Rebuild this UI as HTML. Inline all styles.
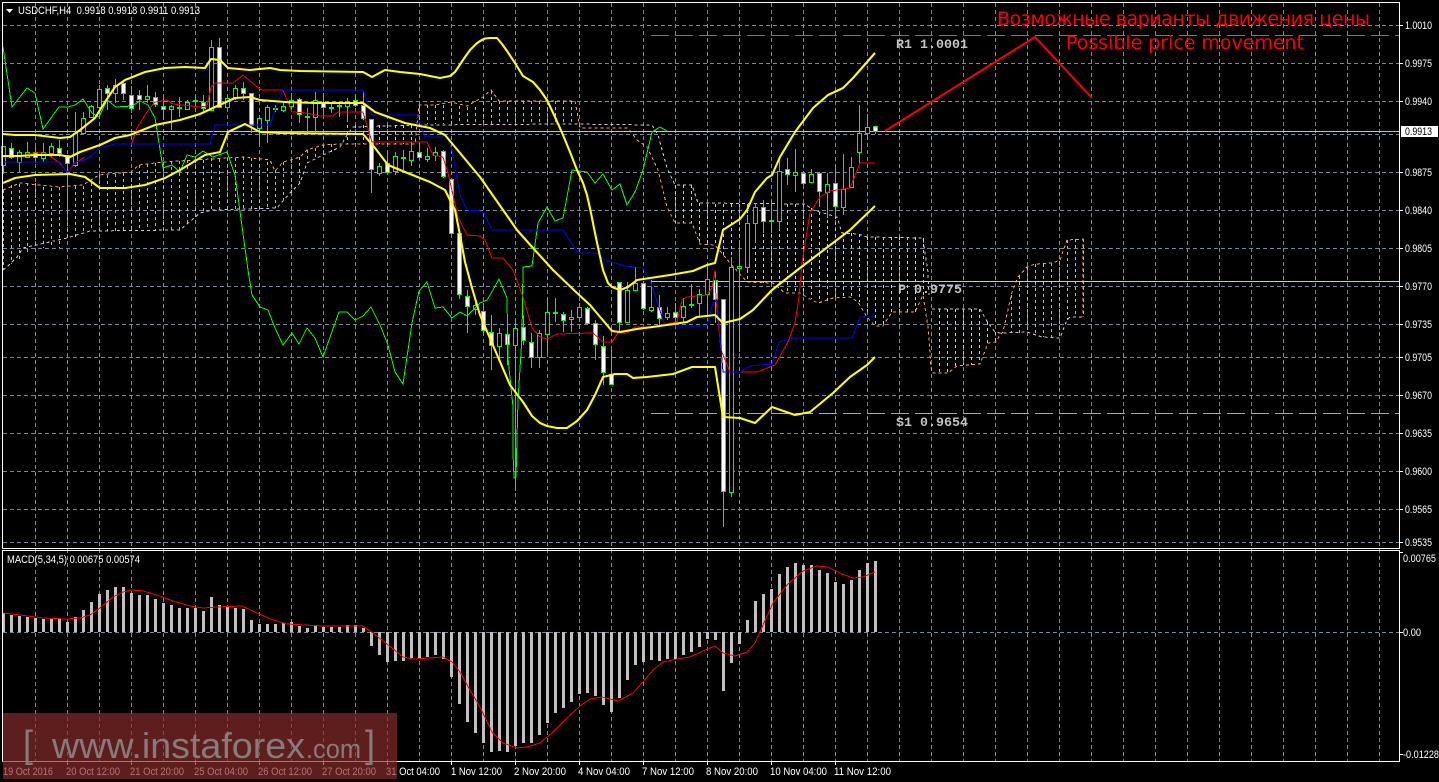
<!DOCTYPE html>
<html lang="en">
<head>
<meta charset="utf-8">
<title>USDCHF,H4</title>
<style>
html,body{margin:0;padding:0;background:#000;width:1439px;height:782px;overflow:hidden}
svg{display:block}
.a{font-family:"Liberation Sans",sans-serif;font-size:11px;fill:#fff}
.m{font-family:"Liberation Mono",monospace;font-size:13.33px;font-weight:bold;fill:#c4c4c4}
.r{font-family:"DejaVu Sans",sans-serif;font-size:19px;fill:#f00}
.c{shape-rendering:crispEdges;fill:none}
</style>
</head>
<body>
<svg width="1439" height="782" viewBox="0 0 1439 782" xmlns="http://www.w3.org/2000/svg">
<rect width="1439" height="782" fill="#000"/>

<!-- grid -->
<path class="c" stroke="#778899" stroke-dasharray="4 3" d="M35.5 3V761M67.5 3V761M99.5 3V761M131.5 3V761M163.5 3V761M195.5 3V761M227.5 3V761M259.5 3V761M291.5 3V761M323.5 3V761M355.5 3V761M387.5 3V761M419.5 3V761M451.5 3V761M483.5 3V761M515.5 3V761M547.5 3V761M579.5 3V761M611.5 3V761M643.5 3V761M675.5 3V761M707.5 3V761M739.5 3V761M771.5 3V761M803.5 3V761M835.5 3V761M867.5 3V761M899.5 3V761M931.5 3V761M963.5 3V761M995.5 3V761M1027.5 3V761M1059.5 3V761M1091.5 3V761M1123.5 3V761M1155.5 3V761M1187.5 3V761M1219.5 3V761M1251.5 3V761M1283.5 3V761M1315.5 3V761M1347.5 3V761M1379.5 3V761"/>
<path class="c" stroke="#778899" stroke-dasharray="4 3" d="M3 25.5H1399M3 63.5H1399M3 101.5H1399M3 134.5H1399M3 172.5H1399M3 210.5H1399M3 248.5H1399M3 286.5H1399M3 324.5H1399M3 357.5H1399M3 395.5H1399M3 433.5H1399M3 471.5H1399M3 509.5H1399M3 542.5H1399M3 632.5H1399"/>

<!-- ichimoku hatch -->
<path class="c" stroke="#f4a460" stroke-dasharray="3 3" d="M3.5 190V270M11.5 185V264M19.5 184V259M27.5 183V252M35.5 183V248M43.5 187V248M51.5 188V248M59.5 187V248M67.5 187V238M75.5 186V237M83.5 186V233M91.5 183V231M99.5 175V231M107.5 175V231M115.5 174V231M123.5 173V231M131.5 172V231M139.5 165V231M147.5 164V231M155.5 163V231M163.5 162V231M171.5 161V231M179.5 161V230M187.5 160V225M195.5 160V218M203.5 160V213M211.5 158V210M219.5 159V210M227.5 158V210M235.5 158V210M243.5 157V210M251.5 158V210M259.5 158V209M267.5 162V209M275.5 170V208M283.5 162V200M291.5 160V193M299.5 157V183M307.5 150V163M315.5 148V160M323.5 145V155M331.5 144V152M419.5 105V124M427.5 105V124M435.5 105V124M443.5 105V124M451.5 103V124M459.5 106V124M467.5 107V124M475.5 107V124M483.5 96V124M491.5 91V124M499.5 101V124M507.5 101V124M515.5 101V124M523.5 101V124M531.5 101V124M539.5 101V124M547.5 101V124M555.5 101V124M563.5 101V124M571.5 101V124M1011.5 295V333M1019.5 276V333M1027.5 267V332M1035.5 264V334M1043.5 264V337M1051.5 263V338M1059.5 261V338M1067.5 240V320M1075.5 239V317M1083.5 239V317"/>
<path class="c" stroke="#d8bfd8" stroke-dasharray="3 3" d="M347.5 125V144M355.5 125V144M363.5 125V144M371.5 125V144M379.5 125V144M387.5 125V144M395.5 125V144M403.5 125V144M411.5 125V144M675.5 185V223M683.5 185V223M691.5 185V223M699.5 203V244M707.5 204V245M715.5 204V245M723.5 204V257M731.5 204V263M739.5 204V270M747.5 204V282M755.5 204V283M763.5 204V283M771.5 204V283M779.5 204V288M787.5 204V293M795.5 204V293M803.5 204V295M811.5 208V299M819.5 212V303M827.5 214V302M835.5 216V298M843.5 233V298M851.5 233V297M859.5 234V302M867.5 237V315M875.5 237V326M883.5 237V326M891.5 237V313M899.5 237V312M907.5 237V312M915.5 237V312M923.5 238V295M939.5 309V373M947.5 309V373M955.5 309V367M963.5 309V365M971.5 309V365M979.5 309V364M987.5 322V343M995.5 332V342"/>
<!-- span A -->
<path class="c" stroke="#f4a460" stroke-dasharray="3 3" d="M3 190L20 183L59 187L83 185L99 175L131 172L139 165L163 162L195 160L243 157L270 160L275 171L283 162L291 160L300 157L307 150L323 145L340 144L400 144L415 144L419 105L435 105L451 102L467 106L483 97L491 90L499 101L575 101L580 128L628 128L637 140L647 147L658 170L667 207L675 223L692 223L700 244L715 245L730 263L747 282L773 283L785 293L800 293L808 298L818 303L833 298L850 297L858 302L867 317L875 326L883 326L890 315L892 312L915 312L923 295L928 327L931 367L932 373L948 373L957 366L980 364L988 343L996 342L1000 335L1003 332L1012 292L1018 277L1027 267L1035 264L1053 263L1060 260L1067 240L1083 239V317"/>
<!-- span B -->
<path class="c" stroke="#d8bfd8" stroke-dasharray="3 3" d="M3 270L7 267L17 257L23 248L67 238L90 231L180 230L200 213L213 210L277 208L290 193L300 183L307 163L323 155L340 147L347 135L353 127L417 125L572 124L652 125L658 135L667 168L675 185L692 185L698 203L805 204L813 210L837 217L842 233L858 234L867 237L923 238L925 253L928 272L929 295M932 309H980L988 323L995 332L1000 333L1027 332L1042 337L1060 338L1067 320L1070 317H1083"/>

<!-- pivot lines -->
<path class="c" stroke="#c0c0c0" d="M3 131.5H1399"/>
<path class="c" stroke="#e0531c" stroke-dasharray="18 6" d="M651 35.5H1399"/>
<path class="c" stroke="#f5cc3a" d="M651 281.5H1399"/>
<path class="c" stroke="#b8a498" stroke-dasharray="18 6" d="M651 413.5H1399"/>

<!-- wicks -->
<path class="c" stroke="#00ff00" d="M3.5 146V174M11.5 143V159M19.5 150V172M27.5 142V157M35.5 147V163M43.5 143V162M51.5 143V157M59.5 140V157M67.5 155V210M75.5 112V167M83.5 112V133M91.5 105V118M99.5 85V118M107.5 85V110M115.5 79V103M123.5 80V100M131.5 86V113M139.5 90V110M147.5 85V103M155.5 92V107M163.5 97V120M171.5 105V130M179.5 97V117M187.5 100V110M195.5 97V107M203.5 95V112M211.5 40V110M219.5 38V108M227.5 95V110M235.5 85V100M243.5 82V100M251.5 93V133M259.5 117V143M267.5 105V143M275.5 105V112M283.5 103V112M291.5 93V112M299.5 98V123M307.5 108V133M315.5 92V133M323.5 93V115M331.5 103V113M339.5 102V117M347.5 98V122M355.5 95V107M363.5 92V120M371.5 119V193M379.5 163V176M387.5 153V173M395.5 152V175M403.5 150V170M411.5 142V166M419.5 142V160M427.5 148V162M435.5 147V161M443.5 150V178M451.5 179V234M459.5 233V299M467.5 290V333M475.5 303V315M483.5 303V333M491.5 315V370M499.5 328V362M507.5 328V365M515.5 320V491M523.5 315V345M531.5 333V368M539.5 330V368M547.5 298V353M555.5 298V322M563.5 312V332M571.5 310V332M579.5 303V320M587.5 307V325M595.5 320V360M603.5 336V385M611.5 350V385M619.5 282V332M627.5 282V323M635.5 267V290M643.5 281V310M651.5 280V312M659.5 295V325M667.5 307V320M675.5 303V318M683.5 298V323M691.5 284V308M699.5 289V318M707.5 263V317M715.5 272V323M723.5 299V527M731.5 257V497M739.5 240V352M747.5 215V270M755.5 203V243M763.5 200V233M771.5 200V233M779.5 158V230M787.5 158V185M795.5 149V192M803.5 172V185M811.5 169V183M819.5 172V207M827.5 173V218M835.5 168V217M843.5 154V215M851.5 157V188M859.5 105V163M867.5 114V140M875.5 126V134"/>
<!-- hollow bodies -->
<path class="c" style="fill:#000" stroke="#00ff00" d="M1.5 146.5h4v19h-4zM17.5 152.5h4v10h-4zM25.5 152.5h4v5h-4zM41.5 152.5h4v6h-4zM49.5 146.5h4v7h-4zM73.5 133.5h4v32h-4zM81.5 118.5h4v15h-4zM89.5 106.5h4v11h-4zM97.5 89.5h4v18h-4zM113.5 85.5h4v8h-4zM145.5 96.5h4v3h-4zM169.5 106.5h4v3h-4zM177.5 107.5h4v1h-4zM185.5 102.5h4v7h-4zM193.5 100.5h4v1h-4zM209.5 47.5h4v63h-4zM225.5 98.5h4v9h-4zM233.5 88.5h4v10h-4zM257.5 118.5h4v10h-4zM265.5 107.5h4v13h-4zM273.5 108.5h4v1h-4zM281.5 106.5h4v4h-4zM289.5 100.5h4v6h-4zM305.5 116.5h4v1h-4zM313.5 100.5h4v17h-4zM329.5 107.5h4v1h-4zM337.5 105.5h4v1h-4zM345.5 101.5h4v5h-4zM377.5 166.5h4v7h-4zM393.5 156.5h4v15h-4zM401.5 157.5h4v1h-4zM409.5 151.5h4v9h-4zM425.5 156.5h4v3h-4zM433.5 152.5h4v3h-4zM473.5 305.5h4v4h-4zM497.5 333.5h4v13h-4zM513.5 328.5h4v17h-4zM537.5 333.5h4v24h-4zM545.5 312.5h4v22h-4zM553.5 312.5h4v1h-4zM569.5 317.5h4v2h-4zM577.5 307.5h4v10h-4zM625.5 290.5h4v32h-4zM633.5 283.5h4v7h-4zM649.5 307.5h4v3h-4zM665.5 313.5h4v4h-4zM681.5 306.5h4v11h-4zM689.5 304.5h4v1h-4zM697.5 294.5h4v9h-4zM705.5 279.5h4v15h-4zM729.5 267.5h4v225h-4zM737.5 266.5h4v2h-4zM745.5 223.5h4v44h-4zM753.5 207.5h4v16h-4zM769.5 220.5h4v1h-4zM777.5 171.5h4v50h-4zM793.5 172.5h4v3h-4zM809.5 174.5h4v8h-4zM825.5 184.5h4v8h-4zM841.5 189.5h4v18h-4zM849.5 167.5h4v20h-4zM857.5 133.5h4v19h-4zM865.5 127.5h4v6h-4z"/>
<!-- white bodies -->
<path class="c" style="fill:#fff" stroke="#00ff00" d="M9.5 148.5h4v9h-4zM33.5 152.5h4v5h-4zM57.5 148.5h4v5h-4zM65.5 155.5h4v8h-4zM105.5 88.5h4v5h-4zM121.5 83.5h4v10h-4zM129.5 95.5h4v13h-4zM137.5 95.5h4v4h-4zM153.5 97.5h4v7h-4zM161.5 106.5h4v3h-4zM201.5 102.5h4v6h-4zM217.5 47.5h4v60h-4zM241.5 88.5h4v5h-4zM249.5 93.5h4v32h-4zM297.5 99.5h4v15h-4zM321.5 102.5h4v5h-4zM353.5 100.5h4v5h-4zM361.5 105.5h4v13h-4zM369.5 119.5h4v50h-4zM385.5 163.5h4v9h-4zM417.5 152.5h4v5h-4zM441.5 151.5h4v25h-4zM449.5 179.5h4v54h-4zM457.5 233.5h4v61h-4zM465.5 296.5h4v10h-4zM481.5 311.5h4v19h-4zM489.5 332.5h4v13h-4zM505.5 334.5h4v10h-4zM521.5 327.5h4v13h-4zM529.5 342.5h4v15h-4zM561.5 314.5h4v6h-4zM585.5 308.5h4v15h-4zM593.5 323.5h4v21h-4zM601.5 346.5h4v26h-4zM609.5 374.5h4v10h-4zM617.5 282.5h4v40h-4zM641.5 283.5h4v25h-4zM657.5 307.5h4v11h-4zM673.5 312.5h4v5h-4zM713.5 280.5h4v19h-4zM721.5 299.5h4v192h-4zM761.5 207.5h4v14h-4zM785.5 169.5h4v5h-4zM801.5 173.5h4v10h-4zM817.5 173.5h4v18h-4zM833.5 183.5h4v23h-4zM873.5 126.5h4v5h-4z"/>

<!-- chikou -->
<path class="c" stroke="#00ff00" d="M3 47L12 107L27 88L35 93L43 129L59 107L68 107L75 105L83 99L92 113L99 117L107 100L116 107L132 106L140 101L148 105L155 118L163 168L172 165L180 172L187 155L195 157L203 151L213 157L227 152L235 175L248 270L252 295L260 307L268 310L275 328L283 345L292 333L299 344L307 328L315 338L323 357L339 312L347 312L355 320L363 316L371 307L380 325L388 345L395 372L403 384L412 323L419 291L427 282L435 308L443 307L452 318L460 312L467 316L475 308L480 303L487 300L493 290L499 279L507 298L508 358L513 407L513 453L514 478L516 477L518 400L522 337L523 267L532 266L538 223L547 207L555 221L563 218L572 170L587 172L595 183L603 174L612 190L620 184L627 205L635 192L643 170L652 132L660 127L667 131"/>
<!-- tenkan red -->
<path class="c" stroke="#ff0000" d="M3 157L20 156L33 153L45 153L60 163L67 172L75 163L85 157M132 143L137 128L147 112L155 102L167 100L173 104L200 107L207 106L211 87L215 83L233 83L243 75L257 87L262 90L283 90L292 112L307 113L320 116L333 116L338 112L363 112L372 142L427 142L433 155L443 157L448 173L458 217L467 235L480 236L485 240L492 258L503 258L513 270L523 297L532 328L540 337L547 339L557 334L593 333L603 342L612 342L618 333L627 333L635 327L650 327L677 322L682 300L687 297L707 295L712 288L715 270L716 300L721 350L730 372L757 372L775 365L788 342L795 323L799 297L802 263L810 213L820 197L830 191L850 188L860 163H875"/>
<!-- kijun blue -->
<path class="c" stroke="#0000ff" d="M3 162H60L67 172L75 162L85 160L92 155L100 148L115 144H210L215 125H270L275 110L283 90H363L372 115H417L425 137H447L452 150L460 195L467 210L480 211L484 213L492 230H563L578 253H597L605 260L625 266L643 268L650 280L665 326H707L713 303L717 300L723 372H740L750 366L772 364L779 342L793 338H852L860 317H875"/>

<!-- bollinger -->
<g fill="none" stroke="#ffff00" stroke-width="2.1" stroke-linejoin="round">
<path d="M3 134L15 135L35 135L60 138L70 137L80 130L95 118L105 102L115 87L125 80L145 72L165 68L185 67L205 68L211 59L220 60L228 68L250 70L270 68L280 70L300 71L363 72L372 77L385 70L400 72L420 74L440 78L450 76L455 72L459 66L465 57L470 50L476 44L480 41L485 38.5L490 38L497 38L502 44L507 51L515 63L523 76L533 82L540 90L547 100L555 117L563 135L570 152L577 170L583 183L587 195L591 213L595 233L599 252L603 270L608 283L612 287L620 290L628 287L637 280L670 275L693 271L707 265L715 263L723 230L740 219L747 210L755 192L767 178L772 175L780 157L795 132L813 108L828 95L843 88L853 78L875 53"/>
<path d="M3 156L20 156L35 155L60 155L70 157L80 152L100 145L115 138L130 135L155 125L180 120L200 114L215 107L235 98L250 97L260 100L285 102L315 103L363 103L375 112L405 123L430 128L445 135L455 147L480 177L517 230L533 248L553 270L577 293L590 305L612 331L620 332L637 329L660 326L687 322L697 317L715 315L723 323L740 319L753 310L772 290L800 268L850 230L875 206"/>
<path d="M3 183L15 178L35 175L70 174L85 177L100 188L125 188L145 185L165 178L180 170L205 155L220 152L228 132L245 124L260 132L280 133L363 134L375 148L388 165L405 172L430 182L445 190L455 210L460 235L465 262L472 288L480 315L495 350L510 385L523 402L532 416L540 423L547 426L557 428L567 428L577 421L587 410L595 395L603 377L615 374L627 374L633 378L647 377L673 374L692 367L715 367L723 417L740 418L755 423L772 407L795 415L810 412L833 393L850 377L867 365L875 357"/>
</g>

<!-- arrow -->
<path fill="none" stroke="#ff0000" stroke-width="2" d="M885 131L1035 37L1092 98"/>

<!-- pivot labels -->
<text class="m" x="896" y="48" textLength="72">R1 1.0001</text>
<text class="m" x="898" y="293" textLength="64">P 0.9775</text>
<text class="m" x="896" y="426" textLength="72">S1 0.9654</text>

<!-- red captions -->
<text class="r" x="997" y="25" textLength="373">Возможные варианты движения цены</text>
<text class="r" x="1066" y="49" textLength="238">Possible price movement</text>

<!-- MACD bars -->
<path class="c" stroke="#c0c0c0" stroke-width="3" d="M3.5 632V613M11.5 632V615M19.5 632V616M27.5 632V617M35.5 632V618M43.5 632V619M51.5 632V618M59.5 632V618M67.5 632V622M75.5 632V617M83.5 632V610M91.5 632V602M99.5 632V594M107.5 632V590M115.5 632V587M123.5 632V587M131.5 632V593M139.5 632V595M147.5 632V595M155.5 632V599M163.5 632V603M171.5 632V605M179.5 632V608M187.5 632V608M195.5 632V608M203.5 632V611M211.5 632V597M219.5 632V605M227.5 632V607M235.5 632V608M243.5 632V609M251.5 632V620M259.5 632V624M267.5 632V624M275.5 632V624M283.5 632V623M291.5 632V622M299.5 632V626M307.5 632V628M315.5 632V626M323.5 632V627M331.5 632V627M339.5 632V627M347.5 632V625M355.5 632V625M363.5 632V628M371.5 632V646M379.5 632V655M387.5 632V662M395.5 632V661M403.5 632V661M411.5 632V658M419.5 632V658M427.5 632V657M435.5 632V655M443.5 632V659M451.5 632V677M459.5 632V704M467.5 632V722M475.5 632V733M483.5 632V743M491.5 632V752M499.5 632V751M507.5 632V752M515.5 632V746M523.5 632V743M531.5 632V743M539.5 632V735M547.5 632V723M555.5 632V713M563.5 632V708M571.5 632V702M579.5 632V694M587.5 632V693M595.5 632V696M603.5 632V705M611.5 632V712M619.5 632V698M627.5 632V680M635.5 632V665M643.5 632V662M651.5 632V660M659.5 632V661M667.5 632V659M675.5 632V659M683.5 632V655M691.5 632V652M699.5 632V647M707.5 632V639M715.5 632V640M723.5 632V691M731.5 632V663M739.5 632V644M747.5 632V620M755.5 632V601M763.5 632V594M771.5 632V589M779.5 632V574M787.5 632V567M795.5 632V563M803.5 632V565M811.5 632V565M819.5 632V570M827.5 632V573M835.5 632V582M843.5 632V584M851.5 632V580M859.5 632V570M867.5 632V563M875.5 632V561"/>
<!-- MACD signal -->
<path class="c" stroke="#ff0000" d="M3 613L20 615L43 618L67 619L80 618L90 615L100 608L113 597L123 592L132 590L143 591L157 595L173 601L190 606L203 608L217 607L242 606L257 613L273 620L287 624L323 626L363 626L373 633L387 644L403 657L413 659L430 658L443 657L452 662L460 672L470 690L480 707L492 732L503 743L517 748L527 747L540 743L552 733L565 720L580 706L590 699L602 697L618 701L633 693L643 682L653 670L663 662L677 659L690 657L703 651L715 646L723 653L735 656L747 652L755 643L763 625L773 603L787 585L803 571L817 566L828 567L842 574L853 578L863 577L875 572"/>

<!-- frames -->
<path class="c" stroke="#fff" d="M2.5 548.5V2.5H1399.5V548.5H2.5M2.5 761.5V550.5H1399.5V761.5H2.5"/>
<path class="c" stroke="#fff" d="M1399 25.5h4M1399 63.5h4M1399 101.5h4M1399 172.5h4M1399 210.5h4M1399 248.5h4M1399 286.5h4M1399 324.5h4M1399 357.5h4M1399 395.5h4M1399 433.5h4M1399 471.5h4M1399 509.5h4M1399 542.5h4M1399 632.5h4M1399 754.5h4M1399 552.5h4M67.5 761v4M131.5 761v4M195.5 761v4M259.5 761v4M323.5 761v4M387.5 761v4M451.5 761v4M515.5 761v4M579.5 761v4M643.5 761v4M707.5 761v4M771.5 761v4M835.5 761v4"/>

<!-- title & triangle -->
<path d="M6 9h7l-3.5 4z" fill="#fff"/>
<text class="a" x="18" y="14" textLength="182" lengthAdjust="spacingAndGlyphs" style="white-space:pre">USDCHF,H4  0.9918 0.9918 0.9911 0.9913</text>
<text class="a" x="7" y="563" textLength="133" lengthAdjust="spacingAndGlyphs">MACD(5,34,5) 0.00675 0.00574</text>

<!-- price scale -->
<g class="a">
<text x="1405" y="29" textLength="27" lengthAdjust="spacingAndGlyphs">1.0010</text>
<text x="1405" y="67" textLength="27" lengthAdjust="spacingAndGlyphs">0.9975</text>
<text x="1405" y="105" textLength="27" lengthAdjust="spacingAndGlyphs">0.9940</text>
<text x="1405" y="176" textLength="27" lengthAdjust="spacingAndGlyphs">0.9875</text>
<text x="1405" y="214" textLength="27" lengthAdjust="spacingAndGlyphs">0.9840</text>
<text x="1405" y="252" textLength="27" lengthAdjust="spacingAndGlyphs">0.9805</text>
<text x="1405" y="290" textLength="27" lengthAdjust="spacingAndGlyphs">0.9770</text>
<text x="1405" y="328" textLength="27" lengthAdjust="spacingAndGlyphs">0.9735</text>
<text x="1405" y="361" textLength="27" lengthAdjust="spacingAndGlyphs">0.9705</text>
<text x="1405" y="399" textLength="27" lengthAdjust="spacingAndGlyphs">0.9670</text>
<text x="1405" y="437" textLength="27" lengthAdjust="spacingAndGlyphs">0.9635</text>
<text x="1405" y="475" textLength="27" lengthAdjust="spacingAndGlyphs">0.9600</text>
<text x="1405" y="513" textLength="27" lengthAdjust="spacingAndGlyphs">0.9565</text>
<text x="1405" y="546" textLength="27" lengthAdjust="spacingAndGlyphs">0.9535</text>
<text x="1403" y="562" textLength="33" lengthAdjust="spacingAndGlyphs">0.00765</text>
<text x="1403" y="636" textLength="18" lengthAdjust="spacingAndGlyphs">0.00</text>
<text x="1403" y="758" textLength="36" lengthAdjust="spacingAndGlyphs">-0.01228</text>
</g>
<rect x="1401" y="126" width="37" height="11" fill="#fff"/>
<text x="1405" y="135" textLength="27" lengthAdjust="spacingAndGlyphs" style="font-family:'Liberation Sans',sans-serif;font-size:11px;fill:#000">0.9913</text>

<!-- time scale -->
<g class="a">
<text x="3" y="775" textLength="50" lengthAdjust="spacingAndGlyphs">19 Oct 2016</text>
<text x="66" y="775" textLength="54" lengthAdjust="spacingAndGlyphs">20 Oct 12:00</text>
<text x="130" y="775" textLength="54" lengthAdjust="spacingAndGlyphs">21 Oct 20:00</text>
<text x="194" y="775" textLength="54" lengthAdjust="spacingAndGlyphs">25 Oct 04:00</text>
<text x="258" y="775" textLength="54" lengthAdjust="spacingAndGlyphs">26 Oct 12:00</text>
<text x="322" y="775" textLength="54" lengthAdjust="spacingAndGlyphs">27 Oct 20:00</text>
<text x="386" y="775" textLength="54" lengthAdjust="spacingAndGlyphs">31 Oct 04:00</text>
<text x="451" y="775" textLength="51" lengthAdjust="spacingAndGlyphs">1 Nov 12:00</text>
<text x="514" y="775" textLength="52" lengthAdjust="spacingAndGlyphs">2 Nov 20:00</text>
<text x="578" y="775" textLength="52" lengthAdjust="spacingAndGlyphs">4 Nov 04:00</text>
<text x="642" y="775" textLength="52" lengthAdjust="spacingAndGlyphs">7 Nov 12:00</text>
<text x="706" y="775" textLength="52" lengthAdjust="spacingAndGlyphs">8 Nov 20:00</text>
<text x="770" y="775" textLength="57" lengthAdjust="spacingAndGlyphs">10 Nov 04:00</text>
<text x="834" y="775" textLength="57" lengthAdjust="spacingAndGlyphs">11 Nov 12:00</text>
</g>

<!-- watermark -->
<rect x="3" y="713" width="394" height="66" fill="rgb(140,45,45)" fill-opacity=".67"/>
<g font-family="'Liberation Sans',sans-serif" fill="#857c7c">
<text x="23" y="757" font-size="38" textLength="10" lengthAdjust="spacingAndGlyphs">[</text>
<text x="52" y="758" font-size="36" textLength="253" lengthAdjust="spacingAndGlyphs">www.instaforex</text>
<text x="306" y="758" font-size="27" textLength="55" lengthAdjust="spacingAndGlyphs">.com</text>
<text x="365" y="757" font-size="38" textLength="10" lengthAdjust="spacingAndGlyphs">]</text>
</g>
</svg>
</body>
</html>
